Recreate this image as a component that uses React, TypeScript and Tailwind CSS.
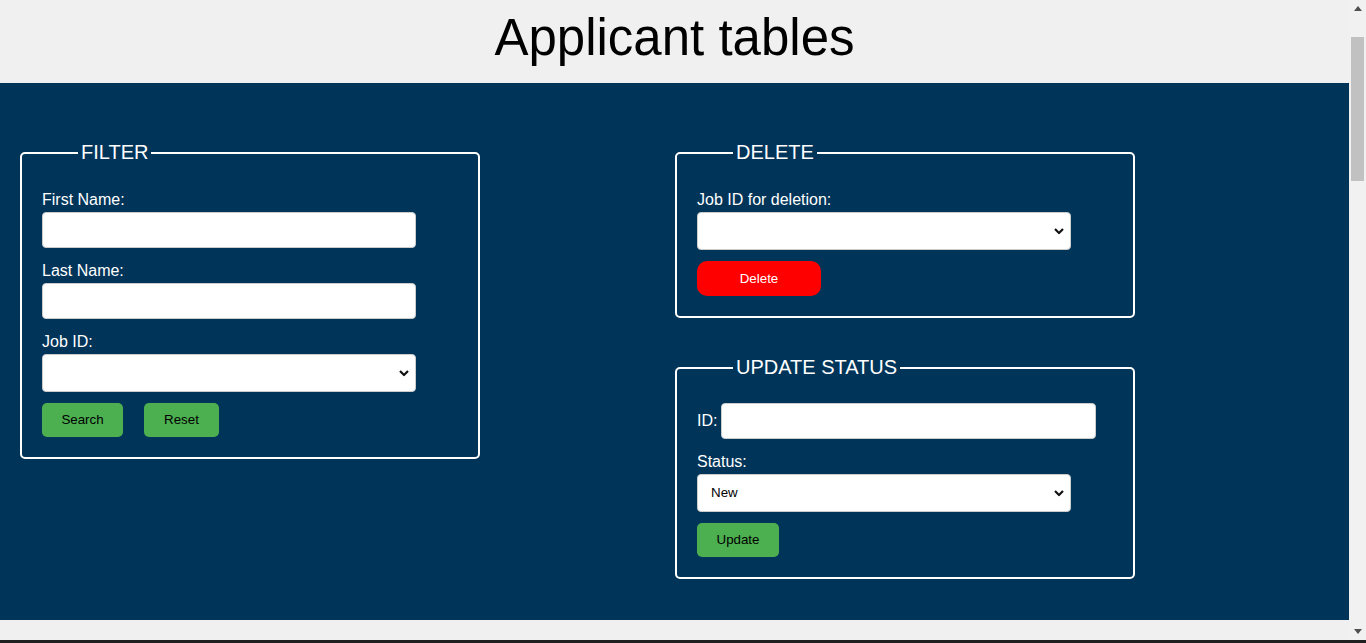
import React from "react";

const Chevron = () => (
  <svg
    className="pointer-events-none absolute right-[7px] top-1/2 -translate-y-1/2"
    width="10"
    height="7"
    viewBox="0 0 10 7"
    fill="none"
  >
    <polyline points="1,1.5 5,5.5 9,1.5" stroke="#111" strokeWidth="2.2" strokeLinejoin="miter" />
  </svg>
);

const SelectBox = ({ value, width = "w-[374px]" }: { value?: string; width?: string }) => (
  <div className={`relative ${width} h-[38px]`}>
    <select
      defaultValue={value}
      className="appearance-none w-full h-full bg-white border border-[#ccc] rounded-[4px] pl-[13px] pr-[30px] text-[13.33px] text-black outline-none"
    >
      {value ? <option>{value}</option> : <option></option>}
    </select>
    <Chevron />
  </div>
);

const TextInput = ({ width = "w-[374px]" }: { width?: string }) => (
  <input
    type="text"
    className={`${width} h-[36px] bg-white border border-[#ccc] rounded-[4px] px-[10px] text-[13.33px] text-black outline-none`}
  />
);

const Label = ({ children, className = "" }: { children: React.ReactNode; className?: string }) => (
  <label className={`block h-[18px] leading-[18px] text-[16px] text-white ${className}`}>{children}</label>
);

const Box = ({
  title,
  className = "",
  pt = "pt-[25px]",
  children,
}: {
  title: string;
  className?: string;
  pt?: string;
  children: React.ReactNode;
}) => (
  <fieldset className={`w-[460px] border-2 border-white rounded-[5px] pl-[20px] pr-[19px] pb-[20px] ${pt} ${className}`}>
    <legend className="ml-[36px] px-[3px] text-[20px] leading-[23px] text-white">{title}</legend>
    {children}
  </fieldset>
);

const GreenButton = ({ children, width }: { children: React.ReactNode; width: string }) => (
  <button className={`${width} h-[34px] bg-[#4caf50] rounded-[5px] text-[13.33px] text-black`}>{children}</button>
);

// window scrollbar as seen in the screenshot
const Scrollbar = () => (
  <div className="w-[17px] shrink-0 bg-[#f1f1f1] flex flex-col items-center">
    <div className="h-[17px] flex items-center justify-center">
      <svg width="8" height="5" viewBox="0 0 8 5">
        <polygon points="0,5 4,0 8,5" fill="#505050" />
      </svg>
    </div>
    <div className="mt-[20px] w-[13px] h-[144px] bg-[#c1c1c1]" />
    <div className="flex-1" />
    <div className="h-[17px] flex items-center justify-center">
      <svg width="8" height="5" viewBox="0 0 8 5">
        <polygon points="0,0 8,0 4,5" fill="#505050" />
      </svg>
    </div>
  </div>
);

export default function App() {
  return (
    <div className="h-[643px] overflow-hidden flex flex-col bg-[#f0f0f0] font-['Liberation_Sans',Arial,sans-serif]">
      <div className="h-[640px] flex">
        <div className="flex-1 min-w-0">
          {/* Header */}
          <header className="h-[83px] pt-[9px] text-center">
            <h1 className="text-[51px] leading-[58px] font-normal text-black">Applicant tables</h1>
          </header>

          {/* Forms */}
          <main className="h-[537px] bg-[#003459] flex pl-[20px] pt-[58px]">
            <div className="w-[655px] shrink-0">
              <Box title="FILTER" pt="pt-[27px]">
                <Label className="mb-[3px]">First Name:</Label>
                <TextInput />
                <Label className="mt-[14px] mb-[3px]">Last Name:</Label>
                <TextInput />
                <Label className="mt-[14px] mb-[3px]">Job ID:</Label>
                <SelectBox />
                <div className="flex gap-[21px] mt-[11px]">
                  <GreenButton width="w-[81px]">Search</GreenButton>
                  <GreenButton width="w-[75px]">Reset</GreenButton>
                </div>
              </Box>
            </div>

            <div className="shrink-0">
              <Box title="DELETE" pt="pt-[27px]">
                <Label className="mb-[3px]">Job ID for deletion:</Label>
                <SelectBox />
                <button className="mt-[11px] w-[124px] h-[35px] bg-[#ff0000] rounded-[10px] text-[13.33px] text-white">
                  Delete
                </button>
              </Box>

              <Box title="UPDATE STATUS" className="mt-[38px]" pt="pt-[24px]">
                <div className="flex items-center gap-[4px]">
                  <span className="text-[16px] leading-[18px] text-white">ID:</span>
                  <TextInput width="w-[375px]" />
                </div>
                <Label className="mt-[14px] mb-[3px]">Status:</Label>
                <SelectBox value="New" />
                <div className="mt-[11px]">
                  <GreenButton width="w-[82px]">Update</GreenButton>
                </div>
              </Box>
            </div>
          </main>
        </div>
        <Scrollbar />
      </div>
      <div className="h-[3px] bg-[#1f1f1f]" />
    </div>
  );
}
